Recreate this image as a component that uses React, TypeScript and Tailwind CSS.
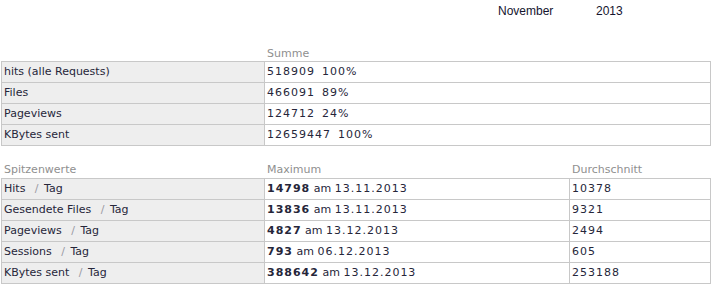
import React from "react";

const font = { fontFamily: '"DejaVu Sans", Verdana, sans-serif' };

function Num({ children, bold }: { children: React.ReactNode; bold?: boolean }) {
  return <span className={(bold ? "font-bold " : "") + "tracking-[1px]"}>{children}</span>;
}

const summary: [string, string, string][] = [
  ["hits (alle Requests)", "518909", "100%"],
  ["Files", "466091", "89%"],
  ["Pageviews", "124712", "24%"],
  ["KBytes sent", "12659447", "100%"],
];

const peaks: [string, string, string, string][] = [
  ["Hits / Tag", "14798", "13.11.2013", "10378"],
  ["Gesendete Files / Tag", "13836", "13.11.2013", "9321"],
  ["Pageviews / Tag", "4827", "13.12.2013", "2494"],
  ["Sessions / Tag", "793", "06.12.2013", "605"],
  ["KBytes sent / Tag", "388642", "13.12.2013", "253188"],
];

function Label({ text }: { text: string }) {
  const parts = text.split(" / ");
  if (parts.length === 1) return <>{text}</>;
  return (
    <>
      {parts[0]}
      <span className="text-[#9a9aa4] pl-[6px] pr-[2px]"> / </span>
      {parts[1]}
    </>
  );
}

export default function App() {
  return (
    <div className="w-[713px] h-[286px] bg-white overflow-hidden text-[11px] text-[#26263a]" style={font}>
      <div className="h-[47px] pt-[4px]">
        <div
          className="flex text-[12px] leading-[14px] text-[#14142e]"
          style={{ fontFamily: '"Liberation Sans", Arial, sans-serif' }}
        >
          <span className="ml-[498px] w-[98px]">November</span>
          <span>2013</span>
        </div>
      </div>

      <div className="ml-[1px] w-[710px]">
        <div className="grid grid-cols-[264px_446px] h-[14px] leading-[14px] text-[#8f8f8f]">
          <div />
          <div className="pl-[2px]">Summe</div>
        </div>
        <div className="grid grid-cols-[263px_446px] border-l border-t border-[#c8c8c8]">
          {summary.map(([label, n, p]) => (
            <React.Fragment key={label}>
              <div className="h-[21px] leading-[20px] pl-[2px] bg-[#eeeeee] border-r border-b border-[#c8c8c8] whitespace-nowrap">
                {label}
              </div>
              <div className="h-[21px] leading-[20px] pl-[2px] border-r border-b border-[#c8c8c8] whitespace-pre">
                <Num>{n}</Num>
                {"  "}
                <Num>{p}</Num>
              </div>
            </React.Fragment>
          ))}
        </div>

        <div className="mt-[17px] grid grid-cols-[264px_305px_141px] h-[14px] leading-[14px] text-[#8f8f8f]">
          <div className="pl-[3px]">Spitzenwerte</div>
          <div className="pl-[2px]">Maximum</div>
          <div className="pl-[2px]">Durchschnitt</div>
        </div>
        <div className="mt-[1px] grid grid-cols-[263px_305px_141px] border-l border-t border-[#c8c8c8]">
          {peaks.map(([label, max, date, avg]) => (
            <React.Fragment key={label}>
              <div className="h-[21px] leading-[20px] pl-[2px] bg-[#eeeeee] border-r border-b border-[#c8c8c8] whitespace-nowrap">
                <Label text={label} />
              </div>
              <div className="h-[21px] leading-[20px] pl-[2px] border-r border-b border-[#c8c8c8] whitespace-nowrap">
                <Num bold>{max}</Num> am <Num>{date}</Num>
              </div>
              <div className="h-[21px] leading-[20px] pl-[2px] border-r border-b border-[#c8c8c8] whitespace-nowrap">
                <Num>{avg}</Num>
              </div>
            </React.Fragment>
          ))}
        </div>
      </div>
    </div>
  );
}
